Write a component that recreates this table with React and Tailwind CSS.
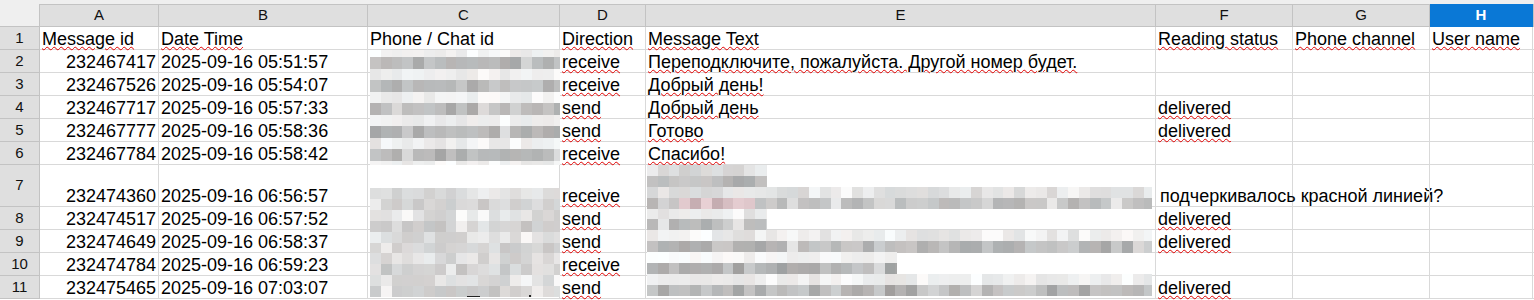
import React from 'react';

const W = ['w-[119px]', 'w-[209px]', 'w-[192px]', 'w-[86px]', 'w-[510px]', 'w-[137px]', 'w-[137px]', 'w-[103px]'];
const LETTERS = ['A', 'B', 'C', 'D', 'E', 'F', 'G', 'H'];

function rng(seed) {
  let s = seed >>> 0;
  return () => {
    s = (s + 0x6d2b79f5) >>> 0;
    let t = s;
    t = Math.imul(t ^ (t >>> 15), t | 1);
    t ^= t + Math.imul(t ^ (t >>> 7), t | 61);
    return ((t ^ (t >>> 14)) >>> 0) / 4294967296;
  };
}

const clamp = (v) => Math.max(0, Math.min(255, Math.round(v)));

function Mosaic({ className, width, rows, bw = 10.8, seed = 1, extra }) {
  const r = rng(seed);
  let y = 0;
  const rects = [];
  rows.forEach((row, ri) => {
    const n = Math.ceil(row.len / bw);
    for (let i = 0; i < n; i++) {
      const x = i * bw;
      const wd = Math.min(bw, row.len - x);
      let v = row.lo + r() * (row.hi - row.lo);
      if (r() < 0.12) v = Math.min(252, v + 25);
      let col;
      if (row.pink && x >= row.pink[0] && x < row.pink[1]) {
        col = `rgb(${clamp(v + 18)},${clamp(v - 6)},${clamp(v - 2)})`;
      } else {
        const t = (r() - 0.5) * 6;
        col = `rgb(${clamp(v)},${clamp(v + t)},${clamp(v + t * 1.4)})`;
      }
      rects.push(
        <rect key={ri + '-' + i} x={x} y={y} width={wd + 0.4} height={row.h + 0.4} fill={col} />
      );
    }
    y += row.h;
  });
  return (
    <svg className={className} width={width} height={y} viewBox={`0 0 ${width} ${y}`} shapeRendering="crispEdges">
      {rects}
      {extra}
    </svg>
  );
}

const U = 'underline decoration-wavy decoration-[#e00000] decoration-1 underline-offset-[1px]';

const rows = [
  { n: 1, cells: [{ t: 'Message id', u: 1 }, { t: 'Date Time', u: 1 }, { t: 'Phone / Chat id' }, { t: 'Direction', u: 1 }, { t: 'Message Text', u: 1 }, { t: 'Reading status', u: 1 }, { t: 'Phone channel', u: 1 }, { t: 'User name', u: 1 }] },
  { n: 2, cells: [{ t: '232467417', r: 1 }, { t: '2025-09-16 05:51:57' }, {}, { t: 'receive', u: 1 }, { t: 'Переподключите, пожалуйста. Другой номер будет.', u: 1 }, {}, {}, {}] },
  { n: 3, cells: [{ t: '232467526', r: 1 }, { t: '2025-09-16 05:54:07' }, {}, { t: 'receive', u: 1 }, { t: 'Добрый день!', u: 1 }, {}, {}, {}] },
  { n: 4, cells: [{ t: '232467717', r: 1 }, { t: '2025-09-16 05:57:33' }, {}, { t: 'send', u: 1 }, { t: 'Добрый день', u: 1 }, { t: 'delivered', u: 1 }, {}, {}] },
  { n: 5, cells: [{ t: '232467777', r: 1 }, { t: '2025-09-16 05:58:36' }, {}, { t: 'send', u: 1 }, { t: 'Готово', u: 1 }, { t: 'delivered', u: 1 }, {}, {}] },
  { n: 6, cells: [{ t: '232467784', r: 1 }, { t: '2025-09-16 05:58:42' }, {}, { t: 'receive', u: 1 }, { t: 'Спасибо!', u: 1 }, {}, {}, {}] },
  { n: 7, tall: 1, cells: [{ t: '232474360', r: 1 }, { t: '2025-09-16 06:56:57' }, {}, { t: 'receive', u: 1 }, {}, { t: 'подчеркивалось красной линией?', ml: 1 }, {}, {}] },
  { n: 8, cells: [{ t: '232474517', r: 1 }, { t: '2025-09-16 06:57:52' }, {}, { t: 'send', u: 1 }, {}, { t: 'delivered', u: 1 }, {}, {}] },
  { n: 9, cells: [{ t: '232474649', r: 1 }, { t: '2025-09-16 06:58:37' }, {}, { t: 'send', u: 1 }, {}, { t: 'delivered', u: 1 }, {}, {}] },
  { n: 10, cells: [{ t: '232474784', r: 1 }, { t: '2025-09-16 06:59:23' }, {}, { t: 'receive', u: 1 }, {}, {}, {}, {}] },
  { n: 11, cells: [{ t: '232475465', r: 1 }, { t: '2025-09-16 07:03:07' }, {}, { t: 'send', u: 1 }, {}, { t: 'delivered', u: 1 }, {}, {}] },
];

function Row({ row }) {
  return (
    <div className={`flex ${row.tall ? 'h-[42px]' : 'h-[23px]'}`}>
      <div className="w-[40px] shrink-0 bg-[#dfdfdf] border-r border-b border-[#c3c3c3] flex items-center justify-center text-[15px] text-[#111]">
        {row.n}
      </div>
      {row.cells.map((c, i) => (
        <div
          key={i}
          className={`${W[i]} shrink-0 border-r border-b border-[#d9d9d9] flex items-end px-[2px] whitespace-nowrap text-[18px] leading-[20px] ${c.r ? 'justify-end' : ''}`}
        >
          {c.t ? <span className={`${c.u ? U : ''} ${c.ml ? 'ml-[2px]' : ''}`}>{c.t}</span> : null}
        </div>
      ))}
      <div className="w-[1px] shrink-0 border-b border-[#d9d9d9]" />
    </div>
  );
}

const cTop = (() => {
  const out = [{ h: 7, len: 190, lo: 232, hi: 246 }];
  for (let k = 0; k < 5; k++) {
    out.push({ h: 11.5, len: 190, lo: 165, hi: 200 });
    out.push({ h: k === 4 ? 4.5 : 11.5, len: 190, lo: 228, hi: 246 });
  }
  return out;
})();

const cBottom = Array.from({ length: 10 }, (_, k) => ({ h: 10.9, len: 190, lo: k % 2 ? 192 : 205, hi: k % 2 ? 222 : 236 }));

const eRows = [
  { h: 10.9, len: 120, lo: 208, hi: 236 },
  { h: 10.9, len: 120, lo: 168, hi: 205 },
  { h: 10.9, len: 505, lo: 212, hi: 238 },
  { h: 10.9, len: 505, lo: 178, hi: 212, pink: [32, 98] },
  { h: 10.9, len: 120, lo: 222, hi: 242 },
  { h: 10.9, len: 120, lo: 170, hi: 208 },
  { h: 10.9, len: 505, lo: 222, hi: 244 },
  { h: 10.9, len: 505, lo: 165, hi: 205 },
  { h: 10.9, len: 250, lo: 236, hi: 250 },
  { h: 10.9, len: 250, lo: 158, hi: 200 },
  { h: 10.9, len: 505, lo: 228, hi: 246 },
  { h: 10.9, len: 505, lo: 160, hi: 205 },
];

export default function App() {
  return (
    <div className="relative w-[1534px] h-[300px] overflow-hidden bg-white font-['Liberation_Sans',Arial,sans-serif] text-black">
      <div className="h-[4px] bg-[#efefef]" />
      <div className="flex h-[23px]">
        <div className="w-[40px] shrink-0 bg-[#efefef] border-r border-b border-[#c3c3c3]" />
        {LETTERS.map((l, i) => (
          <div
            key={l}
            className={`${W[i]} shrink-0 border-r border-b border-t flex items-center justify-center text-[15px] ${
              l === 'H' ? 'bg-[#0a78d6] border-[#0a78d6] text-white font-bold' : 'bg-[#dfdfdf] border-[#c3c3c3] text-[#111]'
            }`}
          >
            {l}
          </div>
        ))}
        <div className="w-[1px] shrink-0 bg-[#c3c3c3]" />
      </div>
      {rows.map((r) => (
        <Row key={r.n} row={r} />
      ))}

      <Mosaic className="absolute left-[370px] top-[50px]" width={190} rows={cTop} seed={7} />
      <Mosaic
        className="absolute left-[370px] top-[188px]"
        width={190}
        rows={cBottom}
        seed={11}
        extra={
          <g fill="#222">
            <rect x={97} y={108} width={13} height={1.2} />
            <rect x={159} y={107} width={2} height={2} />
          </g>
        }
      />
      <Mosaic className="absolute left-[647px] top-[165px]" width={505} rows={eRows} seed={23} />
    </div>
  );
}
